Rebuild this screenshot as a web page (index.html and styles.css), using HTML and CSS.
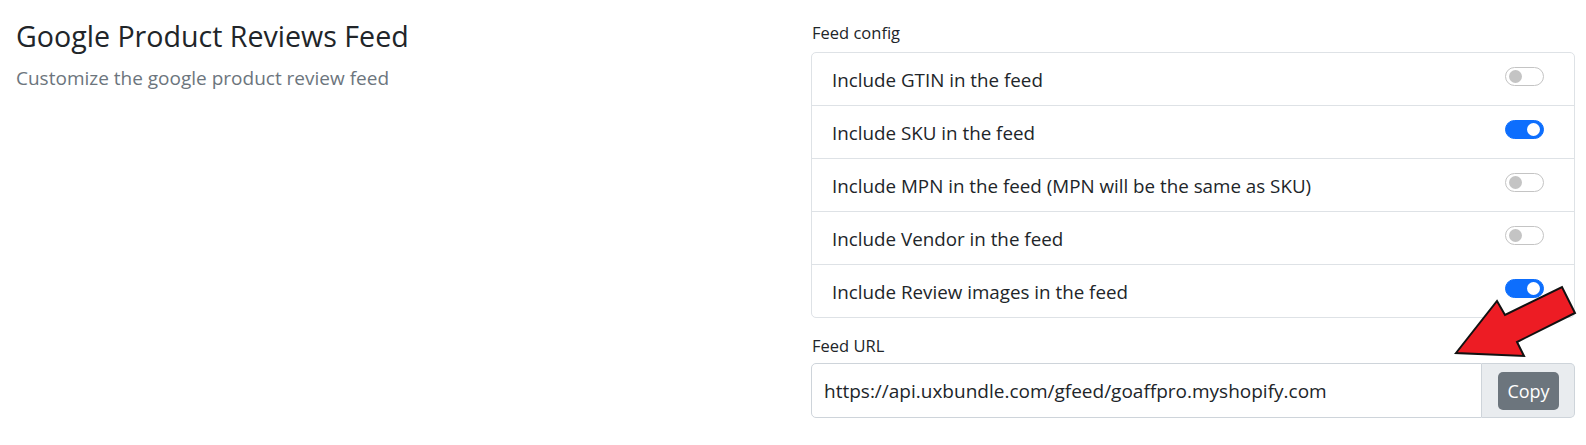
FILE: index.html
```html
<!DOCTYPE html>
<html lang="en">
<head>
<meta charset="utf-8">
<title>Google Product Reviews Feed</title>
<link rel="stylesheet" href="styles.css">
</head>
<body>
<div class="page">
  <div class="intro">
    <h1 class="title">Google Product Reviews Feed</h1>
    <p class="subtitle">Customize the google product review feed</p>
  </div>
  <div class="settings">
    <div class="label">Feed config</div>
    <ul class="card">
      <li class="row"><span>Include GTIN in the feed</span><span class="switch"></span></li>
      <li class="row"><span>Include SKU in the feed</span><span class="switch on"></span></li>
      <li class="row"><span>Include MPN in the feed (MPN will be the same as SKU)</span><span class="switch"></span></li>
      <li class="row"><span>Include Vendor in the feed</span><span class="switch"></span></li>
      <li class="row"><span>Include Review images in the feed</span><span class="switch on"></span></li>
    </ul>
    <div class="label label-url">Feed URL</div>
    <div class="input-group">
      <div class="input">https://api.uxbundle.com/gfeed/goaffpro.myshopify.com</div>
      <div class="append"><button class="btn">Copy</button></div>
    </div>
  </div>
  <svg class="arrow" width="146" height="90" viewBox="0 0 146 90" xmlns="http://www.w3.org/2000/svg">
    <polygon points="16,73 57,21 65,35 122,7 135,33 77,62 84,76" fill="#ed1c24" stroke="#111" stroke-width="2" stroke-linejoin="miter"/>
  </svg>
</div>
</body>
</html>
```

FILE: styles.css
```css
* { box-sizing: border-box; }
html, body { margin: 0; padding: 0; background: #fff; }
body {
  font-family: "Open Sans", "Noto Sans", sans-serif;
  color: #212529;
}
.page {
  position: relative;
  display: grid;
  grid-template-columns: 1fr 764px;
  column-gap: 16px;
  padding: 0 11px 0 16px;
}
.title {
  margin: 19px 0 0;
  font-size: 28.6px;
  font-weight: 400;
  line-height: 1.2;
}
.subtitle {
  margin: 10.5px 0 0;
  font-size: 19px;
  line-height: 1.5;
  color: #6c757d;
}
.settings { display: flex; flex-direction: column; }
.label {
  margin-top: 21px;
  margin-left: 1px;
  font-size: 16.5px;
  line-height: 24px;
}
.label-url { margin-top: 16px; }
.card {
  list-style: none;
  margin: 7px 0 0;
  padding: 0;
  border: 1px solid #dee2e6;
  border-radius: 5px;
}
.row {
  display: flex;
  align-items: center;
  justify-content: space-between;
  height: 52px;
  padding: 2px 30px 0 20px;
  font-size: 18.8px;
  line-height: 1.5;
}
.row + .row { border-top: 1px solid #dee2e6; height: 53px; }
.switch {
  position: relative;
  width: 39px;
  height: 19px;
  margin-bottom: 7px;
  border: 1px solid #c4c4c4;
  border-radius: 10px;
  background: #fff;
  flex: none;
}
.switch::after {
  content: "";
  position: absolute;
  top: 2px;
  left: 3px;
  width: 13px;
  height: 13px;
  border-radius: 50%;
  background: #c4c4c4;
}
.switch.on { background: #0d6efd; border-color: #0d6efd; }
.switch.on::after { left: auto; right: 3px; background: #fff; }
.input-group {
  display: flex;
  margin-top: 5px;
  height: 55px;
}
.input {
  flex: 1;
  display: flex;
  align-items: center;
  padding: 1px 12px 0;
  border: 1px solid #ced4da;
  border-radius: 5px 0 0 5px;
  font-size: 19px;
}
.append {
  display: flex;
  align-items: center;
  width: 93px;
  padding: 0 15px 0 16px;
  background: #e9ecef;
  border: 1px solid #ced4da;
  border-left: none;
  border-radius: 0 5px 5px 0;
}
.btn {
  width: 62px;
  height: 38px;
  border: none;
  border-radius: 5px;
  background: #6c757d;
  color: #fff;
  font-family: "Open Sans", "Noto Sans", sans-serif;
  font-size: 18px;
  padding: 0;
}
.arrow {
  position: absolute;
  left: 1440px;
  top: 280px;
}
```
